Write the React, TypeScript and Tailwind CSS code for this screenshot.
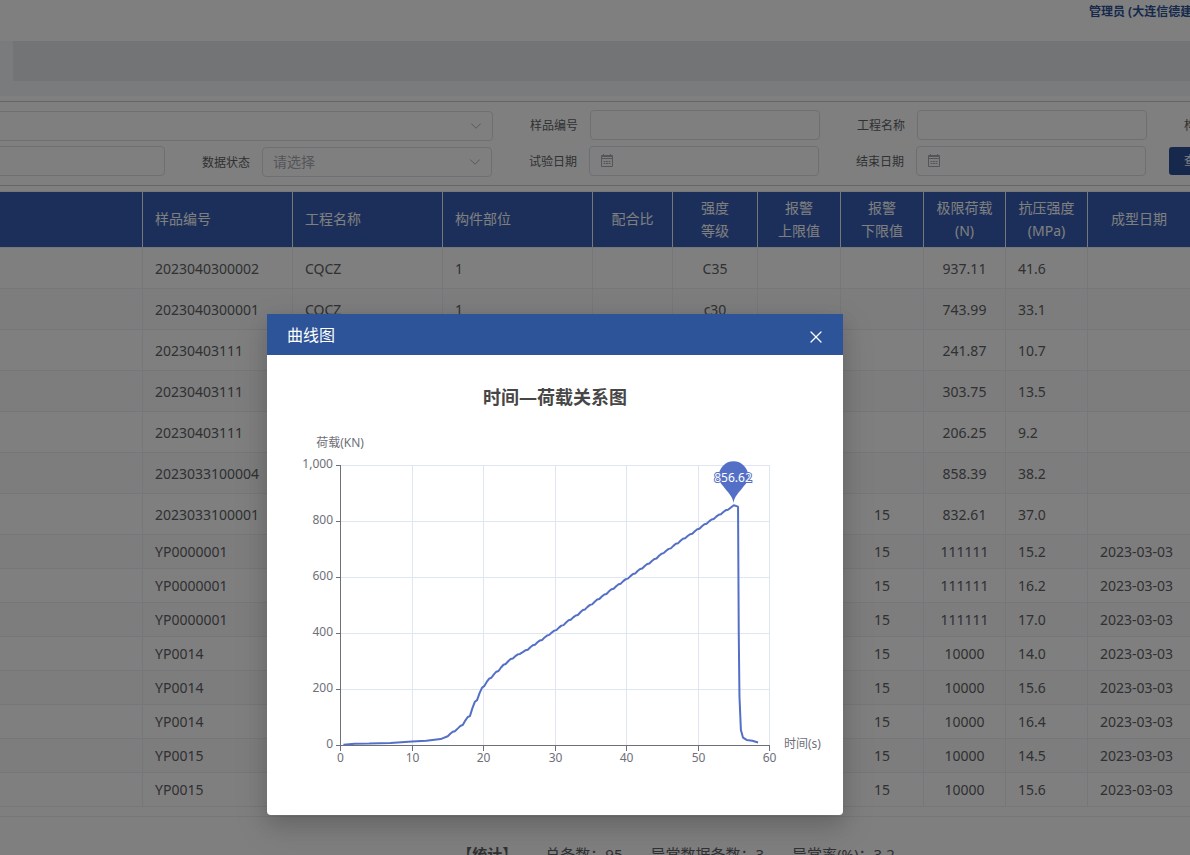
import { useId } from "react";
import { ChevronDown, X } from "lucide-react";

interface SampleRow {
  code: string;
  project?: string;
  part?: string;
  grade?: string;
  lower?: string;
  load: string;
  strength: string;
  date?: string;
}

const rows: SampleRow[] = [
  { code: "2023040300002", project: "CQCZ", part: "1", grade: "C35", load: "937.11", strength: "41.6" },
  { code: "2023040300001", project: "CQCZ", part: "1", grade: "c30", load: "743.99", strength: "33.1" },
  { code: "20230403111", load: "241.87", strength: "10.7" },
  { code: "20230403111", load: "303.75", strength: "13.5" },
  { code: "20230403111", load: "206.25", strength: "9.2" },
  { code: "2023033100004", load: "858.39", strength: "38.2" },
  { code: "2023033100001", lower: "15", load: "832.61", strength: "37.0" },
  { code: "YP0000001", lower: "15", load: "111111", strength: "15.2", date: "2023-03-03" },
  { code: "YP0000001", lower: "15", load: "111111", strength: "16.2", date: "2023-03-03" },
  { code: "YP0000001", lower: "15", load: "111111", strength: "17.0", date: "2023-03-03" },
  { code: "YP0014", lower: "15", load: "10000", strength: "14.0", date: "2023-03-03" },
  { code: "YP0014", lower: "15", load: "10000", strength: "15.6", date: "2023-03-03" },
  { code: "YP0014", lower: "15", load: "10000", strength: "16.4", date: "2023-03-03" },
  { code: "YP0015", lower: "15", load: "10000", strength: "14.5", date: "2023-03-03" },
  { code: "YP0015", lower: "15", load: "10000", strength: "15.6", date: "2023-03-03" },
];

const columns = [
  { lines: [""], width: "w-[143px]", head: "text-left", cell: "text-left" },
  { lines: ["样品编号"], width: "w-[150px]", head: "text-left", cell: "text-left" },
  { lines: ["工程名称"], width: "w-[150px]", head: "text-left", cell: "text-left" },
  { lines: ["构件部位"], width: "w-[150px]", head: "text-left", cell: "text-left" },
  { lines: ["配合比"], width: "w-[80px]", head: "text-center", cell: "text-center" },
  { lines: ["强度", "等级"], width: "w-[85px]", head: "text-center", cell: "text-center" },
  { lines: ["报警", "上限值"], width: "w-[83px]", head: "text-center", cell: "text-center" },
  { lines: ["报警", "下限值"], width: "w-[83px]", head: "text-center", cell: "text-center" },
  { lines: ["极限荷载", "(N)"], width: "w-[82px]", head: "text-center", cell: "text-center" },
  { lines: ["抗压强度", "(MPa)"], width: "w-[82px]", head: "text-center", cell: "text-left" },
  { lines: ["成型日期"], width: "", head: "text-center", cell: "text-left" },
];

const fieldClass = "h-[30px] w-full rounded border border-[#dcdfe6] bg-white text-sm outline-none";
const labelClass = "w-12 shrink-0 whitespace-nowrap pt-0.5 text-xs text-[#606266]";

function TextField({ label, date = false }: { label: string; date?: boolean }) {
  const id = useId();
  return (
    <div className="flex shrink-0 items-center gap-3">
      <label htmlFor={id} className={labelClass}>
        {label}
      </label>
      <div className="relative w-[230px]">
        <input id={id} type="text" className={`${fieldClass} ${date ? "pl-8" : "px-3"}`} />
        {date && <DateIcon />}
      </div>
    </div>
  );
}

function DateIcon() {
  return (
    <svg
      viewBox="0 0 14 14"
      className="absolute left-[11px] top-2 h-3.5 w-3.5"
      fill="none"
      stroke="#a8abb2"
      strokeWidth="1"
      aria-hidden="true"
    >
      <path d="M1.5 1.5h11v11h-11zM1.5 4.5h11M3.5 0v3M10.5 0v3M1.5 2.5h11" />
      <path d="M3.5 7.5h2M6 7.5h2M8.5 7.5h2M3.5 9.5h2M6 9.5h2M8.5 9.5h2" />
    </svg>
  );
}

function SelectBox({ id, label, placeholder = "" }: { id?: string; label?: string; placeholder?: string }) {
  return (
    <div className="relative w-full pt-px">
      <select
        id={id}
        aria-label={label}
        className={`${fieldClass} block appearance-none px-2.5 text-[#a8abb2]`}
      >
        <option>{placeholder}</option>
      </select>
      <ChevronDown size={18} strokeWidth={1.25} className="absolute right-2 top-[7px] text-[#a8abb2]" />
    </div>
  );
}

function Filters() {
  return (
    <form className="mt-[5px] flex flex-col gap-[5px] overflow-hidden border-y border-[#cccccc] pb-2 pt-2">
      <div className="flex items-start gap-[37px]">
        <div className="-ml-1 w-[497px] shrink-0">
          <SelectBox label="委托单位" />
        </div>
        <TextField label="样品编号" />
        <TextField label="工程名称" />
        <TextField label="构件部位" />
      </div>
      <div className="flex items-start gap-[37px]">
        <div className="-ml-1 w-[169px] shrink-0">
          <input type="text" aria-label="关键字" className={`${fieldClass} px-3`} />
        </div>
        <div className="flex shrink-0 items-center gap-3">
          <label htmlFor="status" className={labelClass}>
            数据状态
          </label>
          <div className="w-[230px]">
            <SelectBox id="status" placeholder="请选择" />
          </div>
        </div>
        <TextField label="试验日期" date />
        <TextField label="结束日期" date />
        <button
          type="button"
          className="-ml-3.5 mt-px h-7 shrink-0 rounded-[3px] bg-[#2d5398] px-[15px] text-xs text-white"
        >
          查询
        </button>
      </div>
    </form>
  );
}

function SampleTable() {
  return (
    <table className="mt-[5px] w-full table-fixed border-separate border-spacing-0 border-t border-[#ebeef5] text-sm text-[#606266]">
      <thead>
        <tr className="h-14 bg-[#365eb4] text-white">
          {columns.map((col, i) => (
            <th
              key={i}
              className={`${col.width} ${col.head} border-b border-r border-[#ebeef5] px-2 pb-0.5 font-normal leading-[23px] last:border-r-0`}
            >
              {col.lines.map((line) => (
                <div key={line} className={col.head === "text-left" ? "px-1" : ""}>
                  {line}
                </div>
              ))}
            </th>
          ))}
        </tr>
      </thead>
      <tbody>
        {rows.map((row, i) => {
          const cells = ["", row.code, row.project, row.part, "", row.grade, "", row.lower, row.load, row.strength, row.date];
          return (
            <tr key={i} className={`${row.date ? "h-[34px]" : "h-[41px]"} even:bg-[#fafafa]`}>
              {cells.map((cell, j) => (
                <td
                  key={j}
                  className={`${columns[j].cell} whitespace-nowrap border-b border-r border-[#ebeef5] px-3 leading-[23px] last:border-r-0`}
                >
                  {cell}
                </td>
              ))}
            </tr>
          );
        })}
      </tbody>
    </table>
  );
}

// time (s), load (KN)
const samples: [number, number][] = [
  [0.4, 3], [2, 6], [4, 7], [7, 9], [10, 14], [12, 17], [14, 23], [15, 33], [16, 51], [17.1, 73],
  [18.1, 105], [19.1, 162], [20.1, 212], [21.1, 242], [22.1, 266], [23.1, 291], [24.1, 311],
  [25.1, 327], [26.2, 342], [27.2, 360], [28.2, 377], [29.2, 395], [30.2, 412], [31.2, 430],
  [32.2, 449], [33.2, 466], [34.2, 486], [35.2, 504], [36.2, 523], [37.2, 541], [38.2, 560],
  [39.2, 578], [40.2, 596], [41.2, 614], [42.2, 632], [43.2, 650], [44.2, 668], [45.2, 687],
  [46.2, 704], [47.2, 722], [48.2, 740], [49.2, 756], [50.2, 774], [51.2, 792], [52.2, 809],
  [53.2, 826], [54.2, 842], [55, 858],
];

const unloading: [number, number][] = [
  [55.6, 853], [55.7, 400], [55.8, 174], [56, 55], [56.3, 28], [56.8, 20], [57.6, 17], [58.4, 11],
];

const xTicks = [73.5, 145.5, 216.5, 288.5, 359.5, 431.5, 502.5];
const yTicks = [0, 200, 400, 600, 800, 1000];

const px = (t: number) => 73.5 + t * 7.15;
const py = (v: number) => 390.5 - v * 0.28;

function buildCurve() {
  const points: string[] = [];
  samples.forEach(([t, v], i) => {
    if (i > 7 && i < samples.length - 1) {
      const prev = samples[i - 1][1];
      points.push(`${px(t - 0.65)},${py(prev + (v - prev) * 0.5)}`);
      points.push(`${px(t - 0.3)},${py(prev + (v - prev) * 0.9)}`);
    }
    points.push(`${px(t)},${py(v)}`);
  });
  unloading.forEach(([t, v]) => points.push(`${px(t)},${py(v)}`));
  return points.join(" ");
}

function LoadChart() {
  return (
    <svg viewBox="0 0 576 460" className="block w-full text-xs" role="img" aria-label="时间—荷载关系图">
      <text x="288" y="49" textAnchor="middle" fill="#464646" className="text-lg font-bold">
        时间—荷载关系图
      </text>
      <g stroke="#e0e6f1">
        {xTicks.slice(1).map((x) => (
          <path key={x} d={`M${x} 110V390`} />
        ))}
        {yTicks.slice(1).map((v) => (
          <path key={v} d={`M74 ${py(v)}H503`} />
        ))}
      </g>
      <g stroke="#6e7079">
        <path d="M73.5 110V391M73 390.5H503" />
        {xTicks.map((x) => (
          <path key={x} d={`M${x} 391v5`} />
        ))}
        {yTicks.map((v) => (
          <path key={v} d={`M69 ${py(v)}h5`} />
        ))}
      </g>
      <g fill="#6e7079">
        {xTicks.map((x, i) => (
          <text key={x} x={x} y="407" textAnchor="middle">
            {i * 10}
          </text>
        ))}
        {yTicks.map((v) => (
          <text key={v} x="66" y={py(v) + 2} textAnchor="end">
            {v.toLocaleString("en-US")}
          </text>
        ))}
        <text x="73" y="92" textAnchor="middle">
          荷载(KN)
        </text>
        <text x="517" y="393">
          时间(s)
        </text>
      </g>
      <polyline points={buildCurve()} fill="none" stroke="#5470c6" strokeWidth="2" strokeLinejoin="bevel" />
      <path
        d="M466.5 148C465.5 141 461 137.5 456.5 131.5A14.6 14.6 0 1 1 476.5 131.5C472 137.5 467.5 141 466.5 148Z"
        fill="#5470c6"
      />
      <text x="466" y="127" textAnchor="middle" fill="#fff" stroke="#5470c6" strokeWidth="2" paintOrder="stroke">
        856.62
      </text>
    </svg>
  );
}

function ChartDialog() {
  return (
    <div className="absolute inset-0 flex items-end justify-center bg-black/50 pb-10 pr-20">
      <div
        role="dialog"
        aria-labelledby="dialog-title"
        className="w-[576px] rounded-sm bg-white shadow-[0_12px_32px_4px_rgba(0,0,0,0.1),0_8px_20px_rgba(0,0,0,0.12)]"
      >
        <div className="flex h-[41px] items-center justify-between bg-[#2d5398] pl-5 pr-[17px] text-white">
          <h2 id="dialog-title" className="text-base">
            曲线图
          </h2>
          <button type="button" aria-label="关闭" className="pt-1">
            <X size={20} strokeWidth={1.5} />
          </button>
        </div>
        <LoadChart />
      </div>
    </div>
  );
}

export default function App() {
  return (
    <div className="relative h-screen overflow-hidden bg-white font-['Noto_Sans','Noto_Sans_CJK_SC',sans-serif]">
      <header className="flex h-[41px] justify-end">
        <div className="w-[101px] overflow-hidden whitespace-nowrap pt-1 text-xs font-bold text-[#2d5398]">
          管理员 (大连信德建)
        </div>
      </header>
      <div className="h-[55px] bg-[#f5f7fa] pl-[13px]">
        <div className="h-10 bg-[#e6e8eb]" />
      </div>
      <main>
        <Filters />
        <SampleTable />
        <footer className="mt-[9px] flex justify-center gap-7 border-t border-[#ebeef5] pl-[162px] pt-[26px] text-[15px] text-[#606266]">
          <strong>【统计】</strong>
          <span>总条数：95</span>
          <span>异常数据条数：3</span>
          <span>异常率(%)：3.2</span>
        </footer>
      </main>
      <ChartDialog />
    </div>
  );
}
